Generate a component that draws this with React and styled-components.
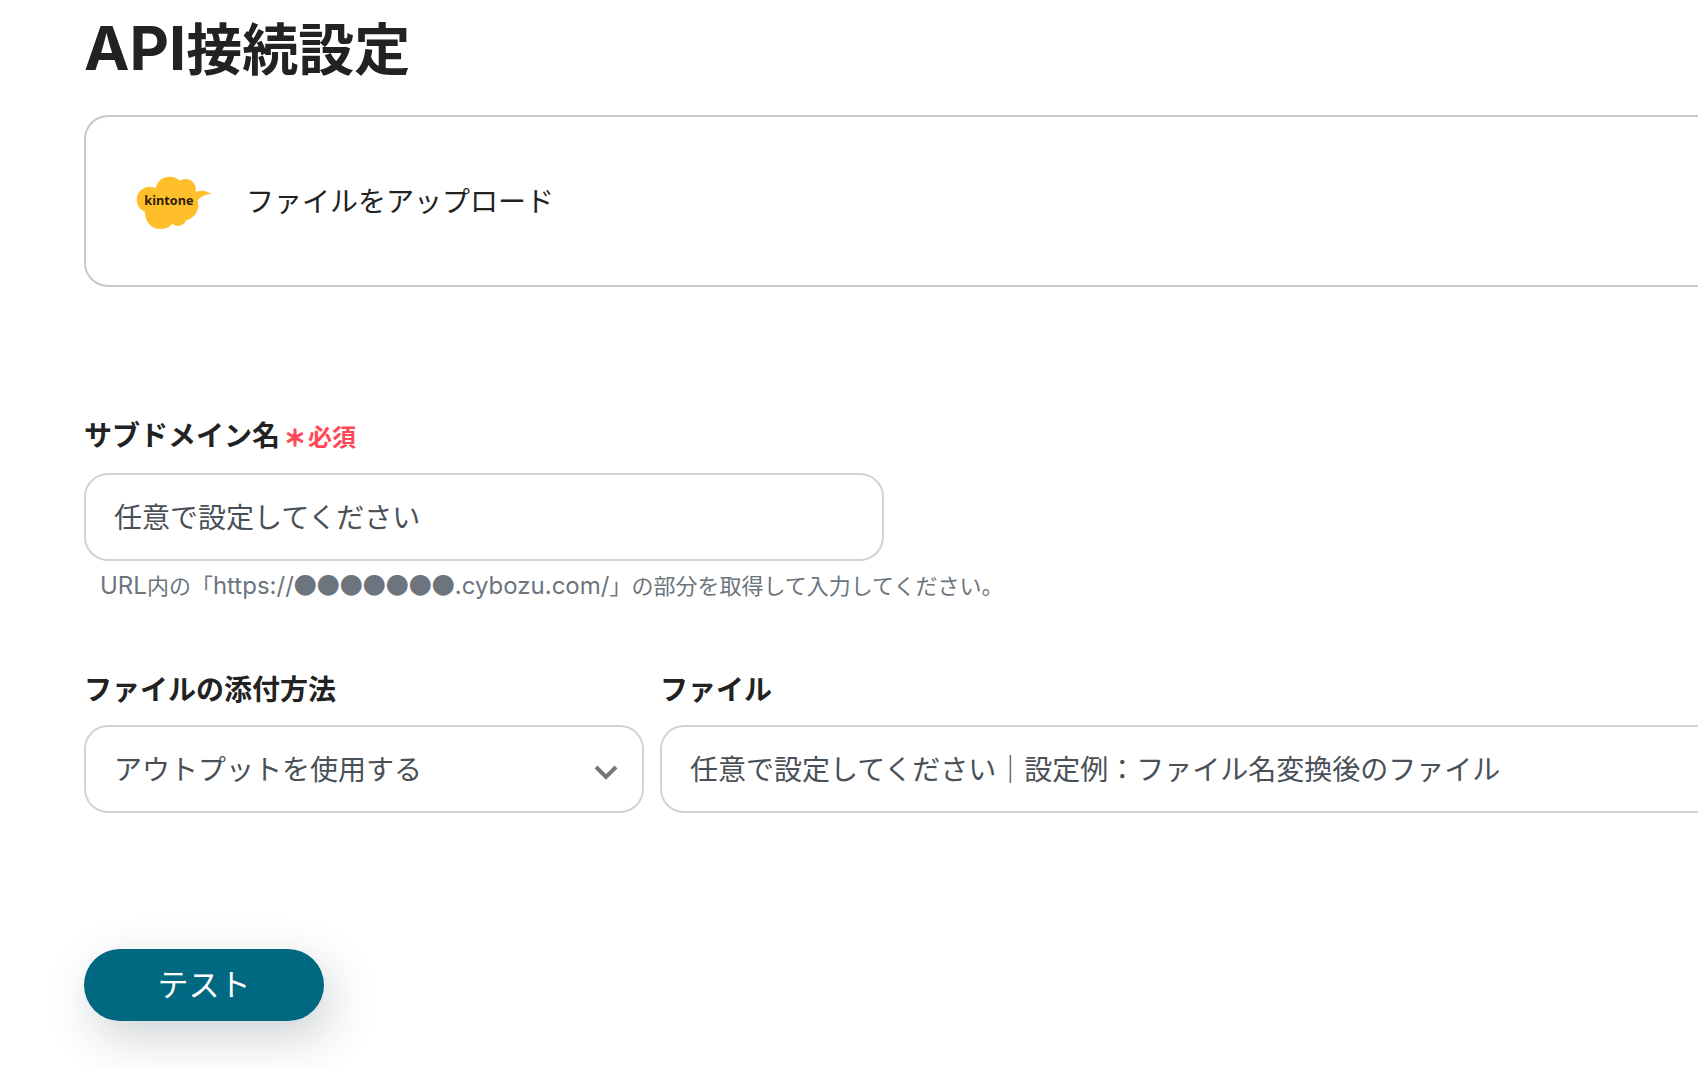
import styled, { createGlobalStyle } from "styled-components";

const App = () => {
    return (
    <Page>
        <GlobalStyle />
        <Title><Latin $size="61px">API</Latin>接続設定</Title>
        <Card>
            <KintoneLogo />
            <span>ファイルをアップロード</span>
        </Card>
        <Form onSubmit={(e) => e.preventDefault()}>
            <Field $width="800px">
                <Label htmlFor="subdomain">サブドメイン名<Required><span>＊</span>必須</Required></Label>
                <Input id="subdomain" type="text" placeholder="任意で設定してください" aria-describedby="subdomain-hint" />
            </Field>
            <Hint id="subdomain-hint">
                <Latin $size="24px">URL</Latin>内の「<Latin $size="24px">https://</Latin><Dots>●●●●●●●</Dots><Latin $size="24px">.cybozu.com/</Latin>」の部分を取得して入力してください。
            </Hint>
            <Row>
                <Field $width="560px">
                    <Label htmlFor="method">ファイルの添付方法</Label>
                    <SelectBox>
                        <Select id="method">
                            <option>アウトプットを使用する</option>
                        </Select>
                        <Chevron viewBox="0 0 24 24" aria-hidden="true">
                            <path d="M2 6 L12 16 L22 6" />
                        </Chevron>
                    </SelectBox>
                </Field>
                <Field>
                    <Label htmlFor="file">ファイル</Label>
                    <Input $bleed id="file" type="text" placeholder="任意で設定してください｜設定例：ファイル名変換後のファイル" />
                </Field>
            </Row>
            <Button type="submit">テスト</Button>
        </Form>
    </Page>
    )
}

const KintoneLogo = () => {
    return (
    <Logo viewBox="48 48 228 162" role="img" aria-label="kintone">
        <g fill="#ffbf2b">
            <circle cx="89" cy="119" r="39" />
            <circle cx="149" cy="93" r="43" />
            <circle cx="197" cy="88" r="31" />
            <circle cx="122" cy="160" r="47" />
            <circle cx="174" cy="171" r="27" />
            <circle cx="188" cy="135" r="47" />
            <path d="M222 97 Q250 86 274 101 Q246 104 231 122 Z" />
        </g>
        <text x="73" y="135">kintone</text>
    </Logo>
    )
}

export default App;

const GlobalStyle = createGlobalStyle`
* {
    box-sizing: border-box;
}

body {
    margin: 0;
    background: #fff;
    color: #222;
    font-family: "Noto Sans CJK JP", sans-serif;
    font-size: 28px;
}

input, select, button {
    font: inherit;
}
`

const Page = styled.main`
min-height: 100vh;
padding: 4px 0 40px 84px;
`

const Title = styled.h1`
margin: 0 0 27px;
font-size: 56px;
line-height: 84px;
`

const Latin = styled.span`
font-family: Inter, "Liberation Sans", sans-serif;
font-size: ${({ $size }) => $size};
line-height: 1;
`

const Card = styled.section`
display: flex;
align-items: center;
gap: 34px;
height: 172px;
padding: 0 50px 2px;
border: 2px solid #c8c8c8;
border-right: 0;
border-radius: 24px 0 0 24px;
`

const Logo = styled.svg`
width: 76px;
height: 54px;
margin-top: 6px;

text {
    fill: #2b1c07;
    font-family: "Open Sans", "Noto Sans", sans-serif;
    font-size: 38px;
    font-weight: 700;
}
`

const Form = styled.form`
margin-top: 126px;
`

const Field = styled.div`
flex: ${({ $width }) => ($width ? "none" : "1")};
width: ${({ $width }) => $width || "auto"};
max-width: 100%;
`

const Label = styled.label`
display: block;
margin-bottom: 16px;
font-weight: 700;
line-height: 42px;
`

const Required = styled.span`
margin-left: 4px;
color: #ff4757;
font-size: 24px;

span {
    margin-right: 2px;
    font-size: 22px;
    -webkit-text-stroke: 1px #ff4757;
}
`

const Input = styled.input`
display: block;
width: 100%;
height: 88px;
padding: 0 28px 2px;
border: 2px solid #ced4da;
border-right-width: ${({ $bleed }) => ($bleed ? "0" : "2px")};
border-radius: ${({ $bleed }) => ($bleed ? "24px 0 0 24px" : "24px")};
background: #fff;
color: #495057;

&::placeholder {
    color: #495057;
    opacity: 1;
}
`

const Hint = styled.p`
margin: 6px 0 66px;
padding-left: 16px;
color: #6c757d;
font-size: 22px;
line-height: 34px;
`

const Dots = styled.span`
font-size: 23px;
line-height: 1;
`

const Row = styled.div`
display: flex;
gap: 16px;
`

const SelectBox = styled.div`
display: grid;
align-items: center;

> * {
    grid-area: 1 / 1;
}
`

const Select = styled.select`
appearance: none;
width: 100%;
height: 88px;
padding: 0 64px 2px 28px;
border: 2px solid #ced4da;
border-radius: 24px;
background: #fff;
color: #495057;
`

const Chevron = styled.svg`
justify-self: end;
width: 24px;
height: 24px;
margin: 8px 26px 0 0;
fill: none;
stroke: #777;
stroke-width: 4;
pointer-events: none;
`

const Button = styled.button`
display: block;
width: 240px;
height: 72px;
margin-top: 136px;
padding: 0 0 4px;
border: 0;
border-radius: 36px;
background: #006880;
box-shadow: 8px 16px 48px rgba(33, 50, 66, 0.22);
color: #fff;
font-size: 31px;
line-height: 48px;
cursor: pointer;
`
